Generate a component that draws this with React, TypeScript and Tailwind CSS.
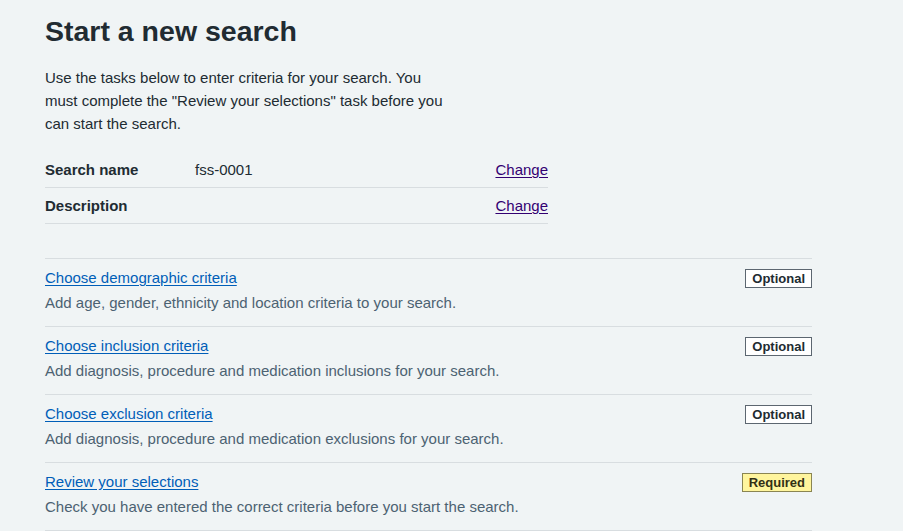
import type { ReactNode } from "react";

type Task = {
  title: string;
  hint: string;
  status: "Optional" | "Required";
};

const tasks: Task[] = [
  {
    title: "Choose demographic criteria",
    hint: "Add age, gender, ethnicity and location criteria to your search.",
    status: "Optional",
  },
  {
    title: "Choose inclusion criteria",
    hint: "Add diagnosis, procedure and medication inclusions for your search.",
    status: "Optional",
  },
  {
    title: "Choose exclusion criteria",
    hint: "Add diagnosis, procedure and medication exclusions for your search.",
    status: "Optional",
  },
  {
    title: "Review your selections",
    hint: "Check you have entered the correct criteria before you start the search.",
    status: "Required",
  },
];

const SummaryRow = ({ label, value }: { label: string; value?: ReactNode }) => (
  <div className="flex items-center border-b border-[#d8dde0] py-2 leading-[19px]">
    <dt className="w-[150px] shrink-0 font-bold">{label}</dt>
    <dd className="flex-1">{value}</dd>
    <dd>
      <a href="#" className="text-[#330072] underline underline-offset-2">
        Change
      </a>
    </dd>
  </div>
);

const Tag = ({ status }: { status: Task["status"] }) =>
  status === "Required" ? (
    <span className="border border-[#8a8552] bg-[#fff59d] px-[6px] py-px text-[13px] font-bold leading-[17px] text-[#333015]">
      Required
    </span>
  ) : (
    <span className="border border-[#5c6670] bg-white px-[6px] py-px text-[13px] font-bold leading-[17px] text-[#212b32]">
      Optional
    </span>
  );

export default function App() {
  return (
    <div className="min-h-screen bg-[#f0f4f5] pl-[45px] pt-[12px] text-[15px] text-[#212b32] [font-family:Arial,'Liberation_Sans',sans-serif]">
      <h1 className="text-[28.5px] font-bold leading-[38px]">Start a new search</h1>

      <p className="mt-[16px] max-w-[410px] leading-[23px]">
        Use the tasks below to enter criteria for your search. You must complete the "Review your selections" task
        before you can start the search.
      </p>

      <dl className="mt-[17px] w-[503px]">
        <SummaryRow label="Search name" value="fss-0001" />
        <SummaryRow label="Description" />
      </dl>

      <ul className="mt-[34px] w-[767px] border-t border-[#d8dde0]">
        {tasks.map((task) => (
          <li key={task.title} className="flex items-start justify-between border-b border-[#d8dde0] pt-2 pb-3">
            <div>
              <a href="#" className="block leading-[22px] text-[#005eb8] underline underline-offset-2">
                {task.title}
              </a>
              <p className="mt-[3px] leading-[22px] text-[#4c6272]">{task.hint}</p>
            </div>
            <div>
              <Tag status={task.status} />
            </div>
          </li>
        ))}
      </ul>
    </div>
  );
}
